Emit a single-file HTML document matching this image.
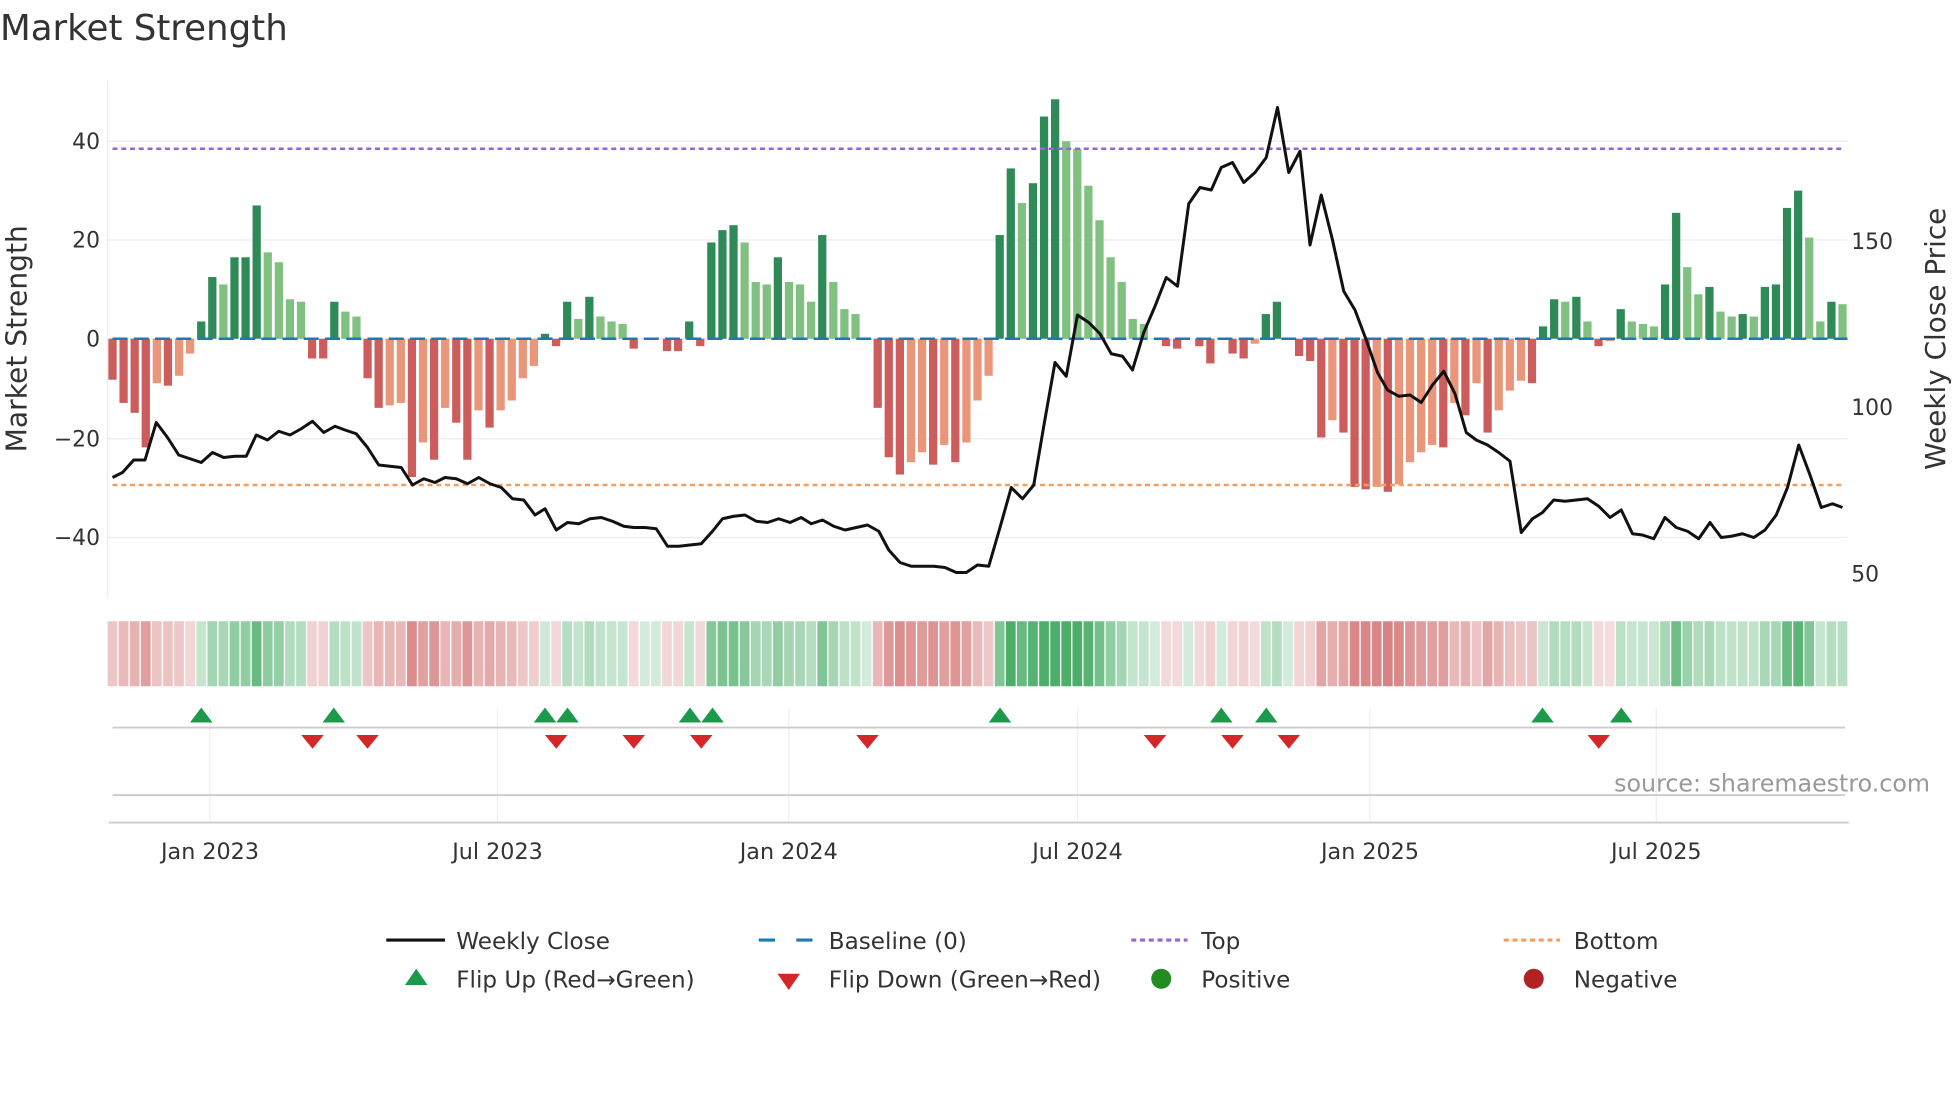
<!DOCTYPE html>
<html><head><meta charset="utf-8"><style>
html,body{margin:0;padding:0;background:#fff;width:1960px;height:1102px;overflow:hidden}
svg text{font-family:"DejaVu Sans","Liberation Sans",sans-serif}
</style></head><body>
<svg id="s" width="1960" height="1102" viewBox="0 0 1568 881.6" xmlns="http://www.w3.org/2000/svg">
<rect width="1568" height="882" fill="#fff"/>
<text x="0" y="32" font-size="28.5" fill="#333">Market Strength</text>
<g stroke="#ececec" stroke-width="1">
<line x1="86" y1="113" x2="1478" y2="113"/><line x1="86" y1="192" x2="1478" y2="192"/>
<line x1="86" y1="271" x2="1478" y2="271"/><line x1="86" y1="351" x2="1478" y2="351"/>
<line x1="86" y1="430" x2="1478" y2="430"/>
<line x1="86" y1="65" x2="86" y2="478"/>
</g>
<g font-size="17.5" fill="#333" text-anchor="end">
<text x="80" y="119">40</text><text x="80" y="198">20</text><text x="80" y="277">0</text>
<text x="80" y="357">−20</text><text x="80" y="436">−40</text>
</g>
<g font-size="17.5" fill="#333">
<text x="1481" y="199">150</text><text x="1481" y="332">100</text><text x="1481" y="465">50</text>
</g>
<text transform="translate(21,271) rotate(-90)" font-size="22.5" fill="#333" text-anchor="middle">Market Strength</text>
<text transform="translate(1556,271) rotate(-90)" font-size="22.3" fill="#333" text-anchor="middle">Weekly Close Price</text>
<g id="bars"></g>
<line x1="90" y1="271" x2="1478" y2="271" stroke="#1f77b4" stroke-width="2" stroke-dasharray="12,5"/>
<line x1="90" y1="119" x2="1476" y2="119" stroke="#9467d8" stroke-width="2" stroke-dasharray="4,3"/>
<line x1="90" y1="388" x2="1476" y2="388" stroke="#f0a060" stroke-width="2" stroke-dasharray="4,3"/>
<polyline id="pl" fill="none" stroke="#111" stroke-width="2.4" stroke-linejoin="round"/>
<g id="heat"></g>
<g stroke="#efefef" stroke-width="1">
<line x1="168" y1="567" x2="168" y2="658"/><line x1="398" y1="567" x2="398" y2="658"/>
<line x1="631" y1="567" x2="631" y2="658"/><line x1="862" y1="567" x2="862" y2="658"/>
<line x1="1096" y1="567" x2="1096" y2="658"/><line x1="1325" y1="567" x2="1325" y2="658"/>
</g>
<line x1="90" y1="582" x2="1476" y2="582" stroke="#ccc" stroke-width="1.5"/>
<line x1="90" y1="636" x2="1476" y2="636" stroke="#ccc" stroke-width="1.5"/>
<line x1="87" y1="658" x2="1479" y2="658" stroke="#ccc" stroke-width="1.5"/>
<g id="mk"></g>
<text x="1544" y="633" font-size="19" fill="#999" text-anchor="end">source: sharemaestro.com</text>
<g font-size="17.8" fill="#333" text-anchor="middle">
<text x="168" y="687">Jan 2023</text><text x="398" y="687">Jul 2023</text><text x="631" y="687">Jan 2024</text>
<text x="862" y="687">Jul 2024</text><text x="1096" y="687">Jan 2025</text><text x="1325" y="687">Jul 2025</text>
</g>
<g font-size="18.5" fill="#333">
<line x1="309" y1="752" x2="356" y2="752" stroke="#111" stroke-width="2.5"/><text x="365" y="759">Weekly Close</text>
<line x1="607" y1="752" x2="620" y2="752" stroke="#1f77b4" stroke-width="2.5"/><line x1="637" y1="752" x2="650" y2="752" stroke="#1f77b4" stroke-width="2.5"/><text x="663" y="759">Baseline (0)</text>
<line x1="905" y1="752" x2="950" y2="752" stroke="#9467d8" stroke-width="2.5" stroke-dasharray="4,3"/><text x="961" y="759">Top</text>
<line x1="1203" y1="752" x2="1248" y2="752" stroke="#f0a060" stroke-width="2.5" stroke-dasharray="4,3"/><text x="1259" y="759">Bottom</text>
<polygon points="333,775 324,788 342,788" fill="#1a9a4a"/><text x="365" y="790">Flip Up (Red→Green)</text>
<polygon points="622,779 640,779 631,792" fill="#d62728"/><text x="663" y="790">Flip Down (Green→Red)</text>
<circle cx="929" cy="783" r="8" fill="#228b22"/><text x="961" y="790">Positive</text>
<circle cx="1227" cy="783" r="8" fill="#b22222"/><text x="1259" y="790">Negative</text>
</g>
</svg>
<script>
var v=[-8.3,-13,-15,-22,-9,-9.5,-7.5,-3,3.5,12.5,11,16.5,16.5,27,17.5,15.5,8,7.5,-4,-4,7.5,5.5,4.5,-8,-14,-13.5,-13,-28,-21,-24.5,-14,-17,-24.5,-14.5,-18,-14.5,-12.5,-8,-5.5,1,-1.5,7.5,4,8.5,4.5,3.5,3,-2,0,0,-2.5,-2.5,3.5,-1.5,19.5,22,23,19.5,11.5,11,16.5,11.5,11,7.5,21,11.5,6,5,0,-14,-24,-27.5,-25,-23,-25.5,-21.5,-25,-21,-12.5,-7.5,21,34.5,27.5,31.5,45,48.5,40,38.5,31,24,16.5,11.5,4,3,0,-1.5,-2,0,-1.5,-5,0,-3,-4,-1,5,7.5,0,-3.5,-4.5,-20,-16.5,-19,-30,-30.5,-30,-31,-29.5,-25,-23,-21.5,-22,-13,-15.5,-9,-19,-14.5,-10.5,-8.5,-9,2.5,8,7.5,8.5,3.5,-1.5,-0.5,6,3.5,3,2.5,11,25.5,14.5,9,10.5,5.5,4.5,5,4.5,10.5,11,26.5,30,20.5,3.5,7.5,7];
var ns="http://www.w3.org/2000/svg",B=document.getElementById('bars'),H=document.getElementById('heat');
function el(t,a,p){var e=document.createElementNS(ns,t);for(var k in a)e.setAttribute(k,a[k]);p.appendChild(e);return e}
var n=v.length,dx=(1474-90)/(n-1);
for(var i=0;i<n;i++){var x=90+dx*i,y=v[i],p=i?v[i-1]:0,h=Math.abs(y)*3.95,c;
 if(y>0)c=(y>=p)?'#2e8b57':'#80c080';else c=(y<=p)?'#cd5c5c':'#e9967a';
 if(y!=0)el('rect',{x:x-3.3,y:y>0?271-h:271,width:6.6,height:h,fill:c},B);
 var a=Math.min(1,0.25+Math.abs(y)/45);
 var hc=y>=0?'rgba(46,160,80,'+(a*0.85)+')':'rgba(200,80,80,'+(a*0.75)+')';
 el('rect',{x:x-3.9,y:497,width:7.8,height:52,fill:hc},H);}
var pts="90,382 98,378 107,368 116,368 125,338 134,350 143,364 152,367 161,370 170,362 179,366 188,365 197,365 205,348 214,352 223,345 232,348 241,343 250,337 259,346 268,341 276,344 285,347 294,358 303,372 312,373 321,374 330,388 339,383 348,386 356,382 365,383 374,387 383,382 392,387 401,390 410,399 419,400 428,412 436,407 445,424 454,418 463,419 472,415 481,414 490,417 499,421 507,422 516,422 525,423 534,437 543,437 552,436 561,435 570,425 578,415 587,413 596,412 605,417 614,418 623,415 632,418 641,414 649,419 658,416 667,421 676,424 685,422 694,420 703,425 711,440 720,450 729,453 738,453 747,453 756,454 765,458 773,458 782,452 791,453 800,422 809,390 818,399 827,388 835,341 844,290 853,301 862,252 871,258 880,267 889,283 898,285 906,296 915,266 924,245 933,222 942,229 951,163 960,150 969,152 977,134 986,130 995,146 1004,138 1013,126 1022,86 1031,138 1040,121 1048,196 1057,156 1066,192 1075,233 1084,248 1093,272 1102,298 1110,312 1119,317 1128,316 1137,322 1146,308 1155,297 1164,315 1173,346 1181,352 1190,356 1199,362 1208,369 1217,426 1226,415 1234,410 1243,400 1252,401 1261,400 1270,399 1279,405 1288,414 1297,408 1306,427 1314,428 1323,431 1332,414 1341,422 1350,425 1359,431 1368,418 1377,430 1385,429 1394,427 1403,430 1412,424 1421,412 1430,390 1439,356 1448,380 1457,406 1466,403 1474,406";
document.getElementById('pl').setAttribute('points',pts);
var M=document.getElementById('mk');
[161,267,436,454,552,570,800,977,1013,1234,1297].forEach(function(x){el('polygon',{points:x+',566 '+(x-9)+',578 '+(x+9)+',578',fill:'#1a9a4a'},M)});
[250,294,445,507,561,694,924,986,1031,1279].forEach(function(x){el('polygon',{points:(x-9)+',588 '+(x+9)+',588 '+x+',599',fill:'#d62728'},M)});
</script>
</body></html>
